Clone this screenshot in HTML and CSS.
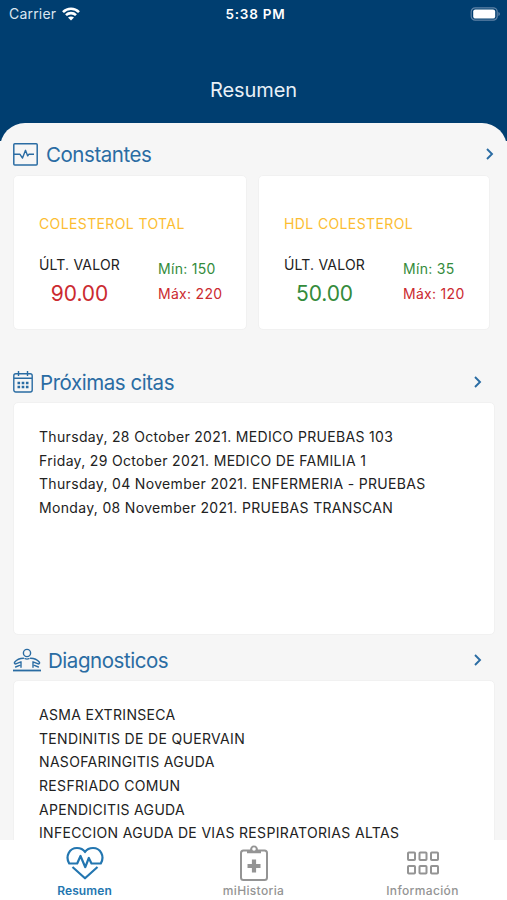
FILE: index.html
```html
<!DOCTYPE html>
<html lang="es">
<head>
<meta charset="utf-8">
<title>Resumen</title>
<link rel="stylesheet" href="styles.css">
</head>
<body>
<div class="app">
  <header class="header">
    <div class="status">
      <div class="carrier"><span>Carrier</span>
        <svg width="18" height="14" viewBox="0 0 18 14" fill="none" stroke="#fff" stroke-width="2.6"><path d="M1 5.1C5.5.6 12.5.6 17 5.1M4 8.2c2.8-2.8 7.2-2.8 10 0"/><path d="M9 13.6 6 10.6c1.7-1.6 4.3-1.6 6 0z" fill="#fff" stroke="none"/></svg>
      </div>
      <span class="time">5:38 PM</span>
      <svg class="battery" width="31" height="14" viewBox="0 0 31 14"><rect x="1.2" y=".8" width="26" height="12.4" rx="4" fill="none" stroke="#5f83a6" stroke-width="1.2"/><rect x="3.2" y="2.4" width="22" height="9.2" rx="2.2" fill="#fff"/><path d="M28.4 5c2 .8 2 3.2 0 4z" fill="#5f83a6"/></svg>
    </div>
    <h1 class="title">Resumen</h1>
  </header>
  <main class="content">
    <section class="section vitals">
      <div class="heading">
        <svg width="25" height="23" viewBox="0 0 25 23" fill="none" stroke="#2a6ca3" stroke-width="1.5" stroke-linejoin="round"><rect x=".8" y=".8" width="23.4" height="21.2" rx="1"/><path d="M1 11.3h6l2.5 3.8 3-7.8 2.2 5.6 1.1-1.6H21" stroke-width="1.4"/></svg>
        <h2>Constantes</h2>
        <svg class="chev" width="9" height="12" viewBox="0 0 9 12"><path d="m2 1 5 5-5 5"/></svg>
      </div>
      <div class="cards">
        <article class="card metric">
          <h3>COLESTEROL TOTAL</h3>
          <div class="values">
            <div class="last"><span>ÚLT. VALOR</span><b class="red">90.00</b></div>
            <div class="range"><span class="green">Mín: 150</span><span class="red">Máx: 220</span></div>
          </div>
        </article>
        <article class="card metric">
          <h3>HDL COLESTEROL</h3>
          <div class="values">
            <div class="last"><span>ÚLT. VALOR</span><b class="green">50.00</b></div>
            <div class="range"><span class="green">Mín: 35</span><span class="red">Máx: 120</span></div>
          </div>
        </article>
      </div>
    </section>
    <section class="section visits">
      <div class="heading">
        <svg width="20" height="22" viewBox="0 0 20 22" fill="none" stroke="#2a6ca3" stroke-width="1.4"><rect x=".8" y="2.8" width="18.4" height="18.2" rx="2"/><path d="M1 7.2h18M5.5 0v5M14.5 0v5"/><path d="M4.5 12h2.6m1.6 0h2.6m1.6 0h2.6M4.5 16h2.6m1.6 0h2.6m1.6 0h2.6" stroke-width="2.6"/></svg>
        <h2>Próximas citas</h2>
        <svg class="chev" width="9" height="12" viewBox="0 0 9 12"><path d="m2 1 5 5-5 5"/></svg>
      </div>
      <ul class="card list">
        <li>Thursday, 28 October 2021. MEDICO PRUEBAS 103</li>
        <li>Friday, 29 October 2021. MEDICO DE FAMILIA 1</li>
        <li>Thursday, 04 November 2021. ENFERMERIA - PRUEBAS</li>
        <li>Monday, 08 November 2021. PRUEBAS TRANSCAN</li>
      </ul>
    </section>
    <section class="section diagnoses">
      <div class="heading">
        <svg width="28" height="24" viewBox="0 0 28 24" fill="none" stroke="#2a6ca3" stroke-width="1.4" stroke-linecap="round" stroke-linejoin="round"><circle cx="14" cy="5" r="3.6"/><path d="M10.5 10.2C6.500 10.200 3.500 11.800 1.600 14.200c-.8 1.200.6 2.200 1.800 1.500L8 13.800v5.400M17.500 10.200c4 0 7 1.600 8.900 4 .8 1.200-.6 2.200-1.800 1.500L20 13.800v5.400M2.600 19l4-1.600M25.400 19l-4-1.600M12 10.700c1.300.5 2.700.5 4 0"/><path d="M0 22.500h28" stroke-width="1.800" stroke-linecap="butt"/></svg>
        <h2>Diagnosticos</h2>
        <svg class="chev" width="9" height="12" viewBox="0 0 9 12"><path d="m2 1 5 5-5 5"/></svg>
      </div>
      <ul class="card list">
        <li>ASMA EXTRINSECA</li>
        <li>TENDINITIS DE DE QUERVAIN</li>
        <li>NASOFARINGITIS AGUDA</li>
        <li>RESFRIADO COMUN</li>
        <li>APENDICITIS AGUDA</li>
        <li>INFECCION AGUDA DE VIAS RESPIRATORIAS ALTAS</li>
      </ul>
    </section>
  </main>
  <nav class="tabs">
    <a class="tab active">
      <svg width="38" height="34" viewBox="0 0 38 34" fill="none" stroke="currentColor" stroke-width="2.200" stroke-linejoin="round"><path d="M8.500 17.500H3.200C-1 10 3.500 2 11 2c3.500 0 6.200 1.300 8 4 1.800-2.700 4.500-4 8-4 7.500 0 12 8 7.800 15.500H25.500L22.800 12l-3.500 9.200L14.500 10l-3.300 7.500H3.200M6.500 21 19 32.300 31.500 21"/></svg>
      <span>Resumen</span>
    </a>
    <a class="tab">
      <svg width="30" height="38" viewBox="0 0 30 38" fill="none" stroke="currentColor" stroke-width="2"><rect x="2" y="6.500" width="26" height="29.500" rx="2.500"/><path d="M8 9.200V6.400h3.200a3.900 3.900 0 1 1 7.600 0H22v2.800z" fill="currentColor" stroke="none"/><circle cx="15" cy="5" r="1.800" fill="#fff" stroke="none"/><path d="M15 15.500v13M8.500 22h13" stroke-width="4.200"/></svg>
      <span>miHistoria</span>
    </a>
    <a class="tab">
      <svg width="34" height="24" viewBox="0 0 34 24" fill="none" stroke="currentColor" stroke-width="2"><rect x="2" y="1.500" width="7" height="7.500" rx=".8"/><rect x="13.500" y="1.500" width="7" height="7.500" rx=".8"/><rect x="25" y="1.500" width="7" height="7.500" rx=".8"/><rect x="2" y="15" width="7" height="7.500" rx=".8"/><rect x="13.500" y="15" width="7" height="7.500" rx=".8"/><rect x="25" y="15" width="7" height="7.500" rx=".8"/></svg>
      <span>Información</span>
    </a>
  </nav>
</div>
</body>
</html>
```
FILE: styles.css
```css
* { box-sizing: border-box; }
body { margin: 0; font-family: Inter, "Liberation Sans", sans-serif; color: #222; }
h1, h2, h3, ul { margin: 0; padding: 0; font-weight: 400; }
ul { list-style: none; }
svg { display: block; flex: none; }

.app { display: flex; flex-direction: column; height: 900px; overflow: hidden; background: #f6f6f6; }
.header { flex: none; height: 141px; background: #003e70; color: #fff; }
.status { display: grid; grid-template-columns: 1fr auto 1fr; align-items: center; height: 27px; padding: 0 6px 0 9px; font-size: 14px; }
.carrier { display: flex; align-items: center; gap: 6px; color: #dbe6f0; letter-spacing: 0.200px; }
.time { font-weight: 600; font-size: 13.500px; letter-spacing: 0.750px; margin-right: -1px; }
.battery { justify-self: end; }
.title { margin-top: 51px; font-size: 20px; line-height: 25px; text-align: center; color: #e8f0f7; letter-spacing: -0.100px; }

.content { flex: 1; min-height: 0; overflow: hidden; margin-top: -18px; padding-left: 13px; border-radius: 25px 25px 0 0; background: #f6f6f6; }
.section { display: flex; flex-direction: column; }
.heading { display: flex; align-items: center; height: 38px; color: #2a6ca3; }
.heading h2 { flex: 1; font-size: 20.500px; line-height: 26px; letter-spacing: -0.450px; padding-top: 1px; }
.chev { fill: none; stroke: #2a6ca3; stroke-width: 1.900; }
.card { background: #fff; border: 1px solid #f1f1f1; border-radius: 5px; }

.vitals { height: 240px; padding: 12px 13px 0 0; }
.vitals .heading { gap: 8px; }
.cards { display: grid; grid-template-columns: 234px 232px; gap: 11px; margin-top: 2px; }
.metric { height: 155px; padding: 37px 0 0 25px; font-size: 14px; }
.metric h3 { font-size: 14px; line-height: 22px; color: #fcbd32; letter-spacing: 0.380px; }
.values { display: grid; grid-template-columns: 81px 1fr; column-gap: 38px; margin-top: 20px; }
.last { display: flex; flex-direction: column; align-items: center; line-height: 20px; letter-spacing: 0.200px; white-space: nowrap; }
.last b { margin-top: 5px; font-size: 21px; line-height: 28px; font-weight: 400; letter-spacing: -0.100px; }
.range { display: flex; flex-direction: column; padding-top: 1px; line-height: 25px; letter-spacing: 0.300px; }
.red { color: #cb2a30; }
.green { color: #348b3b; }

.visits { height: 278px; padding-right: 12px; }
.visits .heading { gap: 7px; padding-right: 13px; }
.list { padding: 22px 25px 0; font-size: 14px; line-height: 23.650px; letter-spacing: 0.330px; white-space: nowrap; }
.visits .list { height: 233px; margin-top: 1px; }

.diagnoses { padding-right: 12px; }
.diagnoses .heading { gap: 7px; padding-right: 13px; }
.diagnoses .list { height: 230px; margin-top: 1px; }

.tabs { flex: none; display: grid; grid-template-columns: repeat(3, 1fr); height: 60px; background: #fff; }
.tab { display: flex; flex-direction: column; align-items: center; color: #949494; font-size: 12px; line-height: 16px; font-weight: 500; letter-spacing: 0.350px; }
.tab svg { margin: auto; position: relative; top: 1px; }
.tab span { margin-bottom: 1px; }
.active { color: #2376b0; font-weight: 600; letter-spacing: 0.100px; }
```
